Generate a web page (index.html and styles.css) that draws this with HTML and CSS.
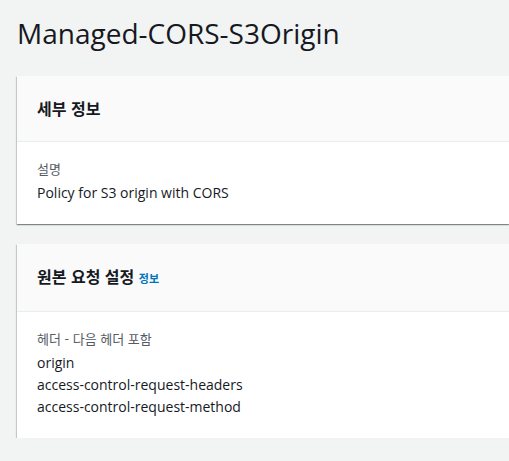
FILE: index.html
```html
<!DOCTYPE html>
<html lang="ko">
<head>
<meta charset="utf-8">
<title>Managed-CORS-S3Origin</title>
<link rel="stylesheet" href="styles.css">
</head>
<body>
<main class="page">
  <h1 class="page-title">Managed-CORS-S3Origin</h1>

  <section class="card">
    <header class="card-header">
      <h2 class="card-title">세부 정보</h2>
    </header>
    <div class="card-body">
      <div class="kv-label">설명</div>
      <div class="kv-values">
        <div class="kv-value">Policy for S3 origin with CORS</div>
      </div>
    </div>
  </section>

  <section class="card">
    <header class="card-header">
      <h2 class="card-title">원본 요청 설정 <a class="info-link" href="#">정보</a></h2>
    </header>
    <div class="card-body">
      <div class="kv-label">헤더 - 다음 헤더 포함</div>
      <div class="kv-values">
        <div class="kv-value">origin</div>
        <div class="kv-value">access-control-request-headers</div>
        <div class="kv-value">access-control-request-method</div>
      </div>
    </div>
  </section>
</main>
</body>
</html>
```
FILE: styles.css
```css
html, body {
  margin: 0;
  padding: 0;
  background: #f2f3f3;
  overflow: hidden;
}

body {
  font-family: "Open Sans", "Noto Sans CJK KR", sans-serif;
  color: #16191f;
}

.page {
  padding: 15px 0 0 17px;
  display: flex;
  flex-direction: column;
  gap: 20px;
}

.page-title {
  margin: 0 0 5px;
  font-size: 28px;
  line-height: 36px;
  font-weight: 400;
  color: #16191f;
}

.card {
  background: #ffffff;
  box-shadow: 0 1px 1px 0 rgba(0, 28, 36, 0.3),
              1px 1px 1px 0 rgba(0, 28, 36, 0.15),
              -1px 1px 1px 0 rgba(0, 28, 36, 0.15);
}

.card-header {
  background: #fafafa;
  border-bottom: 1px solid #eaeded;
  padding: 20px;
}

.card-title {
  margin: 0;
  font-family: "Noto Sans CJK KR", "Open Sans", sans-serif;
  font-size: 16px;
  line-height: 25px;
  font-weight: 700;
  color: #16191f;
}

.info-link {
  font-size: 11px;
  font-weight: 700;
  color: #0073bb;
  text-decoration: none;
}

.card-body {
  padding: 16px 20px 20px;
  display: flex;
  flex-direction: column;
  gap: 2px;
}

.kv-label {
  font-family: "Noto Sans CJK KR", "Open Sans", sans-serif;
  font-size: 13px;
  line-height: 22px;
  color: #545b64;
}

.kv-value {
  font-size: 14px;
  line-height: 22px;
  color: #16191f;
}
```
